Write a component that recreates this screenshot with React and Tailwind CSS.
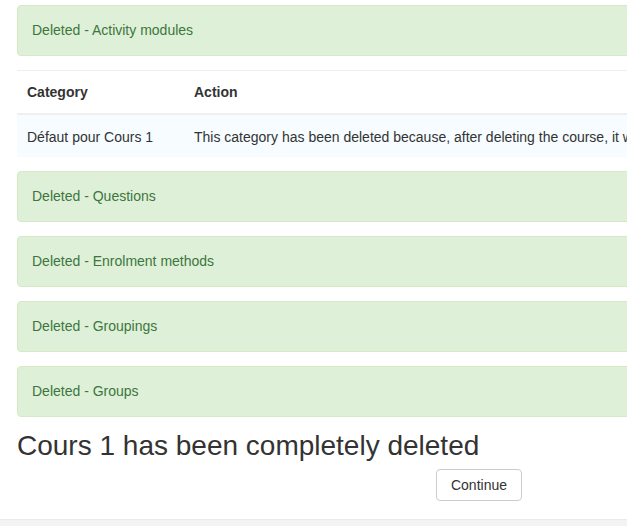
import React from "react";

const sections = ["Questions", "Enrolment methods", "Groupings", "Groups"];

const Alert = ({ children }) => (
  <div className="h-[51px] mb-[14px] flex items-center px-[14px] border border-[#d6e9c6] bg-[#dff0d8] text-[#3c763d] rounded-[4px] text-[14px]">
    {children}
  </div>
);

const App = () => {
  return (
    <div className="w-full min-h-[526px] overflow-hidden bg-white font-['Liberation_Sans',Arial,sans-serif] text-[#333]">
      <div className="w-[958px] px-[17px] pt-[5px]">
        <Alert>Deleted - Activity modules</Alert>

        <table className="w-full mb-[14px] border-collapse text-[14px] text-left">
          <thead>
            <tr className="border-t border-[#eeeeee]">
              <th className="h-[43px] pt-[2px] px-[10px] w-[167px] font-bold border-b-2 border-[#f0f0f0]">
                Category
              </th>
              <th className="h-[43px] pt-[2px] px-[10px] font-bold border-b-2 border-[#f0f0f0]">
                Action
              </th>
            </tr>
          </thead>
          <tbody>
            <tr className="bg-[#f6fcff]">
              <td className="h-[43px] pt-[3px] px-[10px] whitespace-nowrap">Défaut pour Cours 1</td>
              <td className="h-[43px] pt-[3px] px-[10px] whitespace-nowrap">
                This category has been deleted because, after deleting the course, it was empty.
              </td>
            </tr>
          </tbody>
        </table>

        {sections.map((s) => (
          <Alert key={s}>Deleted - {s}</Alert>
        ))}

        <h2 className="text-[28px] leading-[30px] font-normal">
          Cours 1 has been completely deleted
        </h2>

        <div className="flex justify-center mt-[8px]">
          <button className="h-[32px] w-[86px] pt-[1px] border border-[#cccccc] rounded-[4px] bg-white text-[14px] text-[#333]">
            Continue
          </button>
        </div>
      </div>
      <div className="mt-[18px] h-[20px] bg-[#f3f3f3] border-t border-[#eaeaea]" />
    </div>
  );
};

export default App;
